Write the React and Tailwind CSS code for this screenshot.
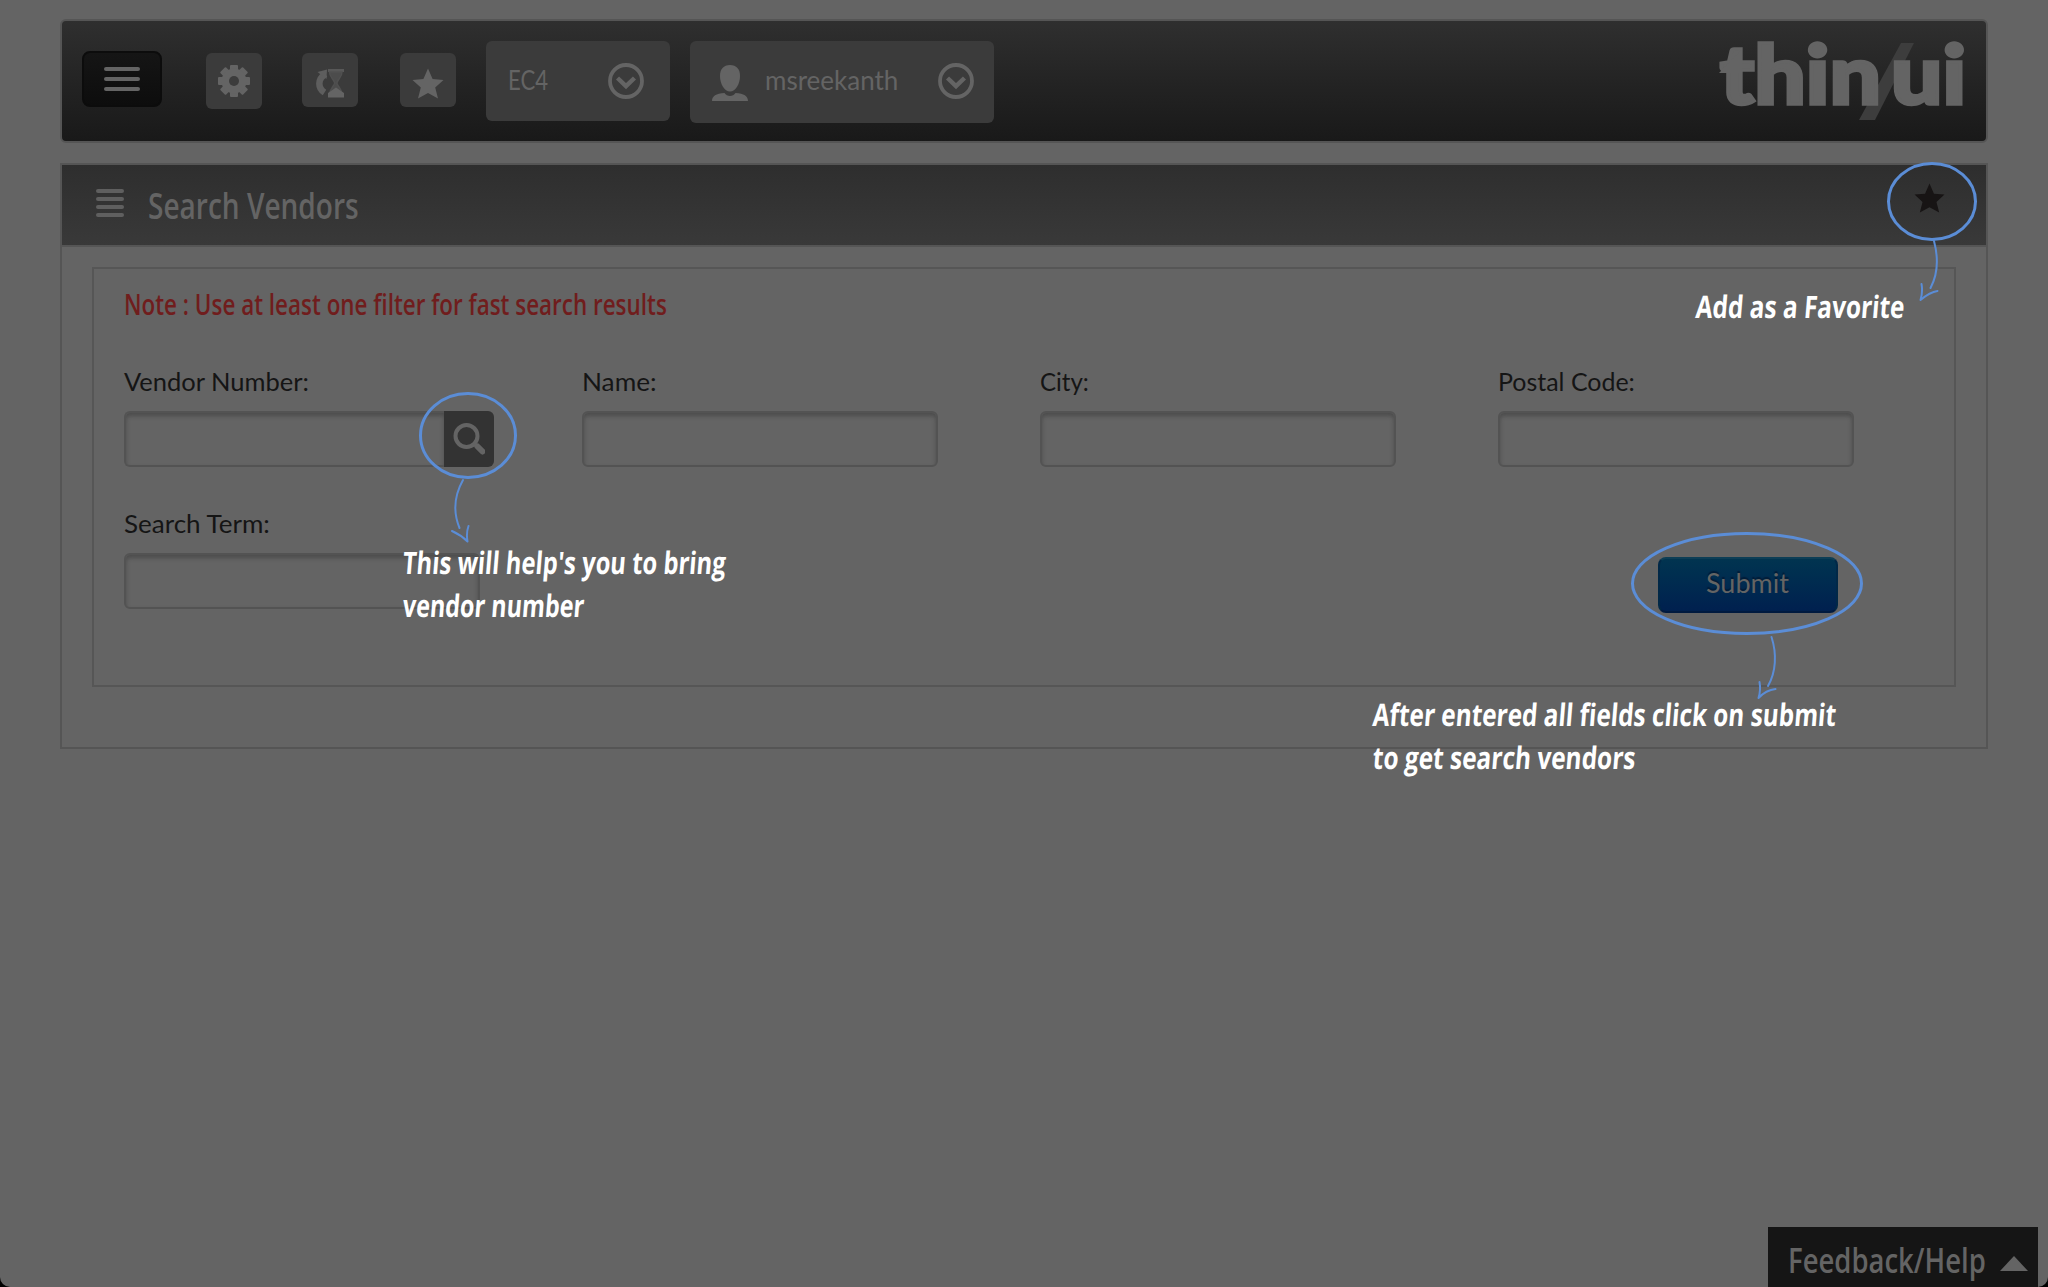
import { useLayoutEffect, useRef, useState } from "react";

const SANS = "font-['Lato','Open_Sans',sans-serif]";
const NARROW = "font-['Open_Sans','Noto_Sans',sans-serif]";

/* One line of text, condensed or widened to a given width. */
function Line({ width, className = "", children }) {
  const ref = useRef(null);
  const [scale, setScale] = useState(1);
  useLayoutEffect(() => {
    const measure = () => {
      if (ref.current) setScale(width / ref.current.offsetWidth);
    };
    measure();
    document.fonts?.ready.then(measure);
  }, [width]);
  return (
    <span className="block" style={{ width }}>
      <span
        ref={ref}
        className={`inline-block origin-left align-top whitespace-nowrap ${className}`}
        style={{ scale: `${scale} 1` }}
      >
        {children}
      </span>
    </span>
  );
}

const STAR = "M16 0.5 L20.6 11 L31.5 12 L23.2 19.6 L26 30.5 L16 25 L6 30.5 L8.8 19.6 L0.5 12 L11.4 11 Z";

function GearIcon() {
  return (
    <svg className="h-8 w-8" viewBox="0 0 32 32" fill="#646464">
      {[0, 45, 90, 135].map((a) => (
        <rect key={a} x="12" y="0" width="8" height="32" rx="1" transform={`rotate(${a} 16 16)`} />
      ))}
      <circle cx="16" cy="16" r="12.5" />
      <circle cx="16" cy="16" r="5" fill="#3c3c3c" />
    </svg>
  );
}

function HistoryIcon() {
  return (
    <svg className="h-[30px] w-7" viewBox="0 0 28 30">
      <path d="M9.5 6 C1.500 11 1.500 20 8.500 24.500" fill="none" stroke="#5e5e5e" strokeWidth="6.5" />
      <path d="M1.5 4 L11 1.5 L10.5 11 Z" fill="#5e5e5e" />
      <path d="M12 1 H28 V4 H12 Z" fill="#585858" />
      <path d="M13.5 4 H26 C26 9 22 11 20.8 15 C22 19 26 21 26 27 H13.5 C13.5 21 17.5 19 18.8 15 C17.5 11 13.5 9 13.5 4 Z" fill="#4c4c4c" stroke="#505050" strokeWidth="1.5" />
      <path d="M12 29.5 V25 L20 19.5 L28 25 V29.5 Z" fill="#646464" />
    </svg>
  );
}

function ChevronCircle() {
  return (
    <svg className="h-9 w-9" viewBox="0 0 36 36" fill="none" stroke="#646464">
      <circle cx="18" cy="18" r="16" strokeWidth="3.8" />
      <path d="M9.5 15 L18 23.2 L26.5 15" strokeWidth="4.4" />
    </svg>
  );
}

function UserIcon() {
  return (
    <svg className="h-9 w-9" viewBox="0 0 36 36" fill="#646464">
      <path d="M18 0 C24.5 0 28 4 28 11 C28 19 23.5 26.5 18 26.5 C12.5 26.5 8 19 8 11 C8 4 11.5 0 18 0 Z" />
      <path d="M0 36 C0 31 4 28.5 12.5 28 C15 32 21 32 23.5 28 C32 28.5 36 31 36 36 Z" />
    </svg>
  );
}

function Logo() {
  return (
    <svg className="h-[120px] w-[250px]" viewBox="0 0 250 120">
      <path d="M185 22 H198 L159 99 H143 Z" fill="#3d3d3d" />
      <g className="font-['Lato',sans-serif]" fill="#646464" stroke="#646464" strokeWidth="3.5" fontSize="82" fontWeight="900">
        <text x="4" y="82.500" textLength="161" lengthAdjust="spacingAndGlyphs">thin</text>
        <text x="175" y="82.500" textLength="75" lengthAdjust="spacingAndGlyphs">ui</text>
      </g>
      <path d="M3 52 L26 28 V52 Z" fill="#646464" />
    </svg>
  );
}

function IconTile({ tall, className = "", children }) {
  return (
    <button className={`flex w-14 items-center justify-center rounded-md bg-[#3b3b3b] ${tall ? "h-14" : "h-[54px]"} ${className}`}>
      {children}
    </button>
  );
}

function TopBar() {
  return (
    <header className="box-content flex h-[120px] w-[1924px] items-start rounded-md border-2 border-[#555] bg-linear-to-b from-[#2f2f2f] to-[#191919]">
      <button className="mt-[30px] ml-5 flex h-14 w-20 flex-col items-center justify-center gap-1.5 rounded-lg border-2 border-[#0c0c0c] bg-linear-to-b from-[#151515] to-[#0d0d0d]">
        <span className="h-1 w-9 rounded-sm bg-[#646464]" />
        <span className="h-1 w-9 rounded-sm bg-[#646464]" />
        <span className="h-1 w-9 rounded-sm bg-[#646464]" />
      </button>
      <IconTile tall className="mt-8 ml-11"><GearIcon /></IconTile>
      <IconTile className="mt-8 ml-10 pt-1.5"><HistoryIcon /></IconTile>
      <IconTile className="mt-8 ml-[42px] pt-1.5">
        <svg className="h-[31px] w-8" viewBox="0 0 32 31"><path d={STAR} fill="#646464" /></svg>
      </IconTile>
      <button className="mt-5 ml-[30px] flex h-20 w-[184px] items-start justify-between rounded-md bg-[#3b3b3b] pt-[22px] pr-[26px] pl-[22px]">
        <Line width={40} className={`${SANS} text-[26px] leading-[34px] text-[#646464]`}>EC4</Line>
        <ChevronCircle />
      </button>
      <button className="mt-5 ml-5 flex h-[82px] w-[304px] items-start rounded-md bg-[#3b3b3b] px-[22px] pt-[22px]">
        <span className="mt-0.5"><UserIcon /></span>
        <span className="ml-[17px] flex-1 text-left">
          <Line width={133} className={`${SANS} text-[26px] leading-[34px] text-[#646464]`}>msreekanth</Line>
        </span>
        <span className="-mr-0.5"><ChevronCircle /></span>
      </button>
      <div className="mr-5 ml-auto"><Logo /></div>
    </header>
  );
}

const BOX = "h-14 border-2 border-[#535353] bg-[#646464] shadow-[inset_0_3px_4px_#4c4c4c] outline-none";

function Field({ label, labelWidth, lookup }) {
  return (
    <label className="block">
      <Line width={labelWidth} className={`${SANS} text-[25.5px] leading-[30px] text-[#151515]`}>{label}</Line>
      <span className="mt-[15px] flex">
        <input className={`${BOX} ${lookup ? "w-80 rounded-l-md border-r-0" : "w-[356px] rounded-md"}`} />
        {lookup && (
          <button className="flex h-14 w-[50px] items-center justify-center rounded-r-md bg-[#333]">
            <svg className="h-8 w-8" viewBox="0 0 32 32" fill="none" stroke="#646464">
              <circle cx="13.5" cy="13" r="11" strokeWidth="4" />
              <path d="M21 20.5 L24 23.5" strokeWidth="3.5" />
              <path d="M24.5 23.5 L29.5 28.5" strokeWidth="6" strokeLinecap="round" />
            </svg>
          </button>
        )}
      </span>
    </label>
  );
}

function SearchPanel() {
  return (
    <main className="mt-5 box-content h-[582px] w-[1924px] border-2 border-[#555]">
      <div className="box-content flex h-20 items-start border-b-2 border-[#555] bg-linear-to-b from-[#2e2e2e] to-[#393939]">
        <div className="mt-6 ml-[34px] flex w-7 flex-col gap-1">
          <span className="h-1 rounded-xs bg-[#5f5f5f]" />
          <span className="h-1 rounded-xs bg-[#5f5f5f]" />
          <span className="h-1 rounded-xs bg-[#5f5f5f]" />
          <span className="h-1 rounded-xs bg-[#5f5f5f]" />
        </div>
        <h1 className="mt-[15px] ml-6">
          <Line width={211} className={`${NARROW} text-[36px] leading-[52px] font-semibold text-[#646464]`}>Search Vendors</Line>
        </h1>
        <svg className="mt-[18px] mr-[41px] ml-auto h-[30px] w-[31px]" viewBox="0 0 32 31"><path d={STAR} fill="#171414" /></svg>
      </div>
      <section className="mt-5 ml-[30px] h-[420px] w-[1864px] border-2 border-[#565656] pt-[15px] pl-[30px]">
        <p>
          <Line width={543} className={`${NARROW} text-[28px] leading-10 font-semibold text-[#701d1d]`}>
            Note : Use at least one filter for fast search results
          </Line>
        </p>
        <form className="mt-[42px] grid grid-cols-[458px_458px_458px_356px] gap-y-[41px]">
          <Field label="Vendor Number:" labelWidth={185} lookup />
          <Field label="Name:" labelWidth={75} />
          <Field label="City:" labelWidth={49} />
          <Field label="Postal Code:" labelWidth={137} />
          <Field label="Search Term:" labelWidth={146} />
          <button
            type="button"
            className="col-start-4 mt-[49px] ml-40 flex h-14 w-[180px] rounded-lg border-2 border-t-[#0d3e56] border-r-[#012847] border-b-[#001a3f] border-l-[#012847] bg-linear-to-b from-[#013450] to-[#00204f] pt-1.5 pl-[46px] text-left"
          >
            <Line width={83} className={`${SANS} text-[26px] leading-9 text-[#646464] [text-shadow:0_-2px_1px_#001c38]`}>Submit</Line>
          </button>
        </form>
      </section>
    </main>
  );
}

const NOTE = `${NARROW} text-[31px] leading-[43px] font-bold text-white -skew-x-6`;

function Tour() {
  return (
    <div className="pointer-events-none absolute inset-0">
      <svg className="absolute inset-0 h-full w-full" viewBox="0 0 2048 1287" fill="none" stroke="#5b8dd6" strokeWidth="3">
        <ellipse cx="1932" cy="201.5" rx="43.5" ry="38" />
        <ellipse cx="468" cy="435.5" rx="47.5" ry="42" />
        <ellipse cx="1747" cy="583.5" rx="114.5" ry="50" />
        <g strokeWidth="2" strokeLinecap="round" strokeLinejoin="round">
          <path d="M1934 241 C1939 260 1938 274 1930.5 288 M1921.500 284 Q1923 292 1920.500 300 Q1930 292 1937.500 291" />
          <path d="M463 480 C454 496 453 512 459.500 528 M452 531 Q461 535 467.500 541.500 Q466 533 468.500 526" />
          <path d="M1771.500 637 C1777 654 1776 672 1768 686 M1759.500 682 Q1761 690 1758.500 698 Q1766 690 1775.500 689" />
        </g>
      </svg>
      <div className="absolute top-[285px] left-[1696px]">
        <Line width={209} className={NOTE}>Add as a Favorite</Line>
      </div>
      <div className="absolute top-[541px] left-[403px]">
        <Line width={323} className={NOTE}>This will help's you to bring</Line>
        <Line width={181} className={NOTE}>vendor number</Line>
      </div>
      <div className="absolute top-[693px] left-[1373px]">
        <Line width={463} className={NOTE}>After entered all fields click on submit</Line>
        <Line width={263} className={NOTE}>to get search vendors</Line>
      </div>
    </div>
  );
}

export default function App() {
  return (
    <div className="h-[1287px] w-[2048px] overflow-hidden bg-black">
      <div className="relative flex h-full flex-col overflow-hidden rounded-b-[10px] bg-[#646464] pt-[19px] pl-[60px]">
        <TopBar />
        <SearchPanel />
        <Tour />
        <footer className="mt-auto mr-[10px] ml-auto flex h-[60px] w-[270px] items-start bg-[#151515] pt-[7px] pl-5">
          <Line width={198} className={`${NARROW} text-[34px] leading-[52px] font-semibold text-[#646464]`}>Feedback/Help</Line>
          <svg className="mt-[22px] ml-3.5 h-[15px] w-7" viewBox="0 0 28 15"><path d="M14 0 L28 15 H0 Z" fill="#646464" /></svg>
        </footer>
      </div>
    </div>
  );
}
